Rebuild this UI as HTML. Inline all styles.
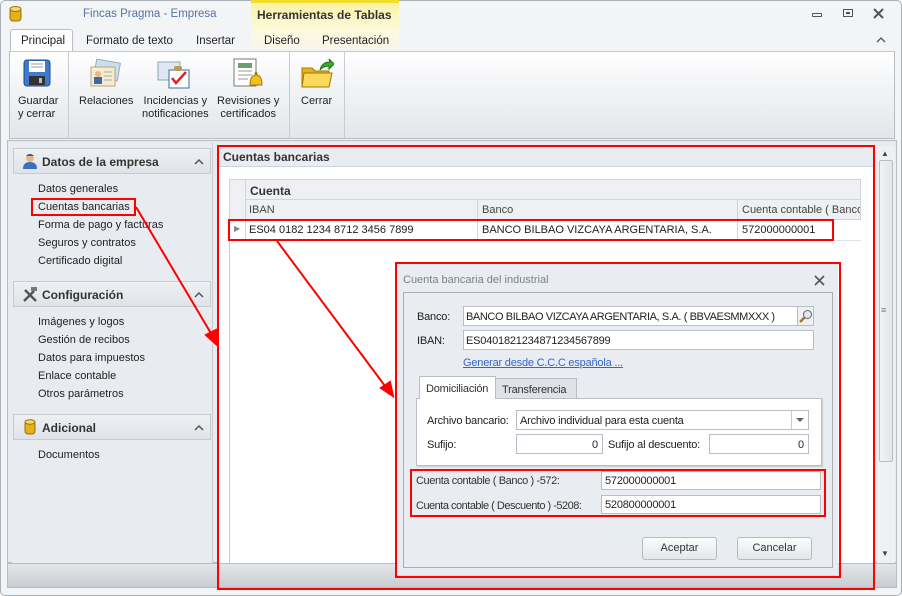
<!DOCTYPE html>
<html><head><meta charset="utf-8"><style>
*{box-sizing:border-box;margin:0;padding:0}
body{width:902px;height:596px;overflow:hidden;background:#fff;font-family:"Liberation Sans",sans-serif;font-size:11px;color:#222;position:relative}
.a{position:absolute}
.t{position:absolute;white-space:nowrap;margin-top:1px}
.n{letter-spacing:-0.2px}
.inp{position:absolute;background:#fff;border:1px solid #b9bec6}
.red{position:absolute;border:2px solid #f00}
.grp{position:absolute;left:13px;width:198px;height:26px;border:1px solid #c7ccd3;background:linear-gradient(#eef0f3,#dfe3e8);font-weight:bold;font-size:12px;color:#333}
.grp .chev{position:absolute;right:10px;top:4px;font-size:11px;color:#555;font-weight:normal}
.item{position:absolute;left:38px;color:#222;margin-top:1px}
.btn{position:absolute;border:1px solid #b5bac2;border-radius:3px;background:linear-gradient(#fafbfc,#e4e7eb);text-align:center;line-height:21px;color:#333}
</style></head><body>
<div class="a" style="left:0;top:0;width:902px;height:596px;background:#f3f4f6;border:1px solid #aab0b8;border-radius:5px"></div>
<svg class="a" style="left:9px;top:5px" width="14" height="18"><rect x="1" y="3" width="11" height="13" rx="3" fill="#e6b01c" stroke="#9a6f08"/><ellipse cx="6.5" cy="4" rx="5.5" ry="2.5" fill="#f8d860" stroke="#9a6f08"/></svg>
<div class="t" style="left:83px;top:7px;color:#5575a5;font-size:11.5px">Fincas Pragma - Empresa</div>
<div class="a" style="left:251px;top:0;width:148px;height:50px;background:linear-gradient(#fbf2a8,#fdf9dd 60%,#f8f6ec);border-top:3px solid #f2dc2c"></div>
<div class="t" style="left:257px;top:7px;font-weight:bold;font-size:12px;color:#333">Herramientas de Tablas</div>
<div class="a" style="left:812px;top:13px;width:10px;height:4px;border:1px solid #555;border-radius:1px"></div>
<div class="a" style="left:843px;top:9px;width:10px;height:8px;border:1px solid #555"><div class="a" style="left:2px;top:2px;width:4px;height:2px;border:1px solid #555"></div></div>
<svg class="a" style="left:873px;top:8px" width="11" height="11"><path d="M1 1 L10 10 M10 1 L1 10" stroke="#555" stroke-width="2"/></svg>
<svg class="a" style="left:876px;top:36px" width="10" height="8"><path d="M1 6 L5 2 L9 6" stroke="#555" fill="none" stroke-width="1.3"/></svg>
<div class="a" style="left:10px;top:29px;width:63px;height:23px;background:#fff;border:1px solid #b8bdc5;border-bottom:none;border-radius:3px 3px 0 0"></div>
<div class="t" style="left:21px;top:34px;font-size:11.5px">Principal</div>
<div class="t" style="left:86px;top:34px;font-size:11.5px">Formato de texto</div>
<div class="t" style="left:196px;top:34px;font-size:11.5px">Insertar</div>
<div class="t" style="left:264px;top:34px;font-size:11.5px">Diseño</div>
<div class="t" style="left:322px;top:34px;font-size:11.5px">Presentación</div>
<div class="a" style="left:9px;top:51px;width:886px;height:88px;background:linear-gradient(#fff,#f3f4f6 40%,#e3e6ea);border:1px solid #b8bdc5;border-top-color:#c4c9d0"></div>
<div class="a" style="left:68px;top:52px;width:1px;height:86px;background:#c9cdd3"></div>
<div class="a" style="left:289px;top:52px;width:1px;height:86px;background:#c9cdd3"></div>
<div class="a" style="left:344px;top:52px;width:1px;height:86px;background:#c9cdd3"></div>
<svg class="a" style="left:23px;top:59px" width="28" height="28"><rect x="1" y="1" width="26" height="26" rx="3" fill="#3d7ccc" stroke="#204a86"/><rect x="6" y="2" width="16" height="11" fill="#fff"/><line x1="8" y1="5" x2="20" y2="5" stroke="#999"/><line x1="8" y1="8" x2="20" y2="8" stroke="#999"/><rect x="6" y="17" width="16" height="9" fill="#333"/><rect x="16" y="19" width="3" height="5" fill="#bbb"/></svg>
<svg class="a" style="left:89px;top:59px" width="32" height="30"><rect x="6" y="2" width="24" height="18" fill="#cde" stroke="#9ab" transform="rotate(10 18 11)"/><rect x="2" y="8" width="24" height="19" fill="#f5ecd0" stroke="#b9a675"/><circle cx="9" cy="15" r="3" fill="#e8b68a"/><rect x="5" y="18" width="8" height="7" fill="#3a6aa8"/><line x1="15" y1="13" x2="23" y2="13" stroke="#aaa"/><line x1="15" y1="17" x2="23" y2="17" stroke="#aaa"/><line x1="15" y1="21" x2="23" y2="21" stroke="#aaa"/></svg>
<svg class="a" style="left:157px;top:58px" width="34" height="32"><rect x="1" y="4" width="22" height="18" fill="#dde8f4" stroke="#8aa"/><rect x="12" y="12" width="20" height="18" fill="#fff" stroke="#3a6ab0"/><path d="M15 20 l4 5 l10 -11" stroke="#e02020" stroke-width="2.5" fill="none"/><rect x="17" y="8" width="8" height="5" rx="2" fill="#b89a5a"/></svg>
<svg class="a" style="left:232px;top:58px" width="32" height="30"><rect x="2" y="1" width="22" height="27" fill="#fff" stroke="#777"/><rect x="6" y="5" width="14" height="5" fill="#6aa070"/><line x1="6" y1="13" x2="20" y2="13" stroke="#999"/><line x1="6" y1="17" x2="20" y2="17" stroke="#999"/><line x1="6" y1="21" x2="16" y2="21" stroke="#999"/><path d="M18 27 q0 -10 6 -10 q6 0 6 10 z" fill="#f0c020" stroke="#a07a00"/><circle cx="24" cy="15.5" r="1.5" fill="#a07a00"/></svg>
<svg class="a" style="left:300px;top:58px" width="34" height="32"><path d="M2 10 h10 l3 3 h14 v16 h-27z" fill="#e8b020" stroke="#a07a00"/><path d="M4 15 h28 l-3 14 h-27z" fill="#fcd85a" stroke="#a07a00"/><path d="M20 12 q2 -8 10 -8 l-1 -3 l5 5 l-5 5 l0 -3 q-6 0 -9 4z" fill="#3ab030" stroke="#1a7010"/></svg>
<div class="t" style="left:18px;top:94px;line-height:13px">Guardar<br>y cerrar</div>
<div class="t" style="left:79px;top:94px">Relaciones</div>
<div class="t" style="left:142px;top:94px;line-height:13px;text-align:center">Incidencias y<br>notificaciones</div>
<div class="t" style="left:217px;top:94px;line-height:13px;text-align:center">Revisiones y<br>certificados</div>
<div class="t" style="left:301px;top:94px">Cerrar</div>
<div class="a" style="left:7px;top:140px;width:890px;height:423px;background:#e8ebef;border:1px solid #b8bdc5"></div>
<div class="a" style="left:12px;top:143px;width:201px;height:420px;background:#e8ebef;border-right:1px solid #c9cdd3"></div>
<div class="grp" style="top:148px"><svg class="a" style="left:8px;top:4px" width="16" height="17"><circle cx="8" cy="5" r="4" fill="#e8b68a"/><path d="M4 3 q4 -4 8 0 z" fill="#2a5aa0"/><path d="M1 16 q0 -7 7 -7 q7 0 7 7z" fill="#3a70c0"/></svg><span class="t" style="left:28px;top:5px">Datos de la empresa</span><svg class="a" style="left:180px;top:9px" width="10" height="7"><path d="M1 6 L5 2 L9 6" stroke="#555" fill="none" stroke-width="1.5"/></svg></div>
<div class="item" style="top:182px">Datos generales</div>
<div class="item" style="top:200px">Cuentas bancarias</div>
<div class="item" style="top:218px">Forma de pago y facturas</div>
<div class="item" style="top:236px">Seguros y contratos</div>
<div class="item" style="top:254px">Certificado digital</div>
<div class="grp" style="top:281px"><svg class="a" style="left:8px;top:4px" width="16" height="17"><path d="M2 15 l10 -10 M3 4 l11 11" stroke="#555" stroke-width="2.5"/><rect x="9" y="1" width="6" height="4" fill="#777"/></svg><span class="t" style="left:28px;top:5px">Configuración</span><svg class="a" style="left:180px;top:9px" width="10" height="7"><path d="M1 6 L5 2 L9 6" stroke="#555" fill="none" stroke-width="1.5"/></svg></div>
<div class="item" style="top:315px">Imágenes y logos</div>
<div class="item" style="top:333px">Gestión de recibos</div>
<div class="item" style="top:351px">Datos para impuestos</div>
<div class="item" style="top:369px">Enlace contable</div>
<div class="item" style="top:387px">Otros parámetros</div>
<div class="grp" style="top:414px"><svg class="a" style="left:10px;top:3px" width="12" height="18"><rect x="1" y="3" width="10" height="13" rx="3" fill="#e6b01c" stroke="#9a6f08"/><ellipse cx="6" cy="4" rx="5" ry="2.2" fill="#f8d860" stroke="#9a6f08"/></svg><span class="t" style="left:28px;top:5px">Adicional</span><svg class="a" style="left:180px;top:9px" width="10" height="7"><path d="M1 6 L5 2 L9 6" stroke="#555" fill="none" stroke-width="1.5"/></svg></div>
<div class="item" style="top:448px">Documentos</div>
<div class="a" style="left:218px;top:146px;width:656px;height:417px;background:#fff"></div>
<div class="a" style="left:218px;top:146px;width:656px;height:21px;background:#e9ecf0;border-bottom:1px solid #d0d4da"></div>
<div class="t" style="left:223px;top:149px;font-weight:bold;font-size:12px;color:#333">Cuentas bancarias</div>
<div class="a" style="left:229px;top:179px;width:632px;height:384px;border-left:1px solid #c9cdd3"></div>
<div class="a" style="left:229px;top:179px;width:632px;height:41px;background:#eef0f3;border:1px solid #d0d4da"></div>
<div class="a" style="left:245px;top:179px;width:1px;height:62px;background:#d0d4da"></div>
<div class="a" style="left:245px;top:199px;width:616px;height:1px;background:#d0d4da"></div>
<div class="a" style="left:477px;top:199px;width:1px;height:42px;background:#d0d4da"></div>
<div class="a" style="left:737px;top:199px;width:1px;height:42px;background:#d0d4da"></div>
<div class="a" style="left:229px;top:240px;width:632px;height:1px;background:#e0e3e7"></div>
<div class="t" style="left:250px;top:183px;font-weight:bold;font-size:12px;color:#333">Cuenta</div>
<div class="t" style="left:249px;top:203px;color:#444">IBAN</div>
<div class="t" style="left:482px;top:203px;color:#444">Banco</div>
<div class="a" style="left:738px;top:200px;width:122px;height:19px;overflow:hidden"><div class="t" style="left:4px;top:3px;color:#444">Cuenta contable ( Banco</div></div>
<div class="t" style="left:234px;top:223px;font-size:8px;color:#888">▶</div>
<div class="t" style="left:249px;top:223px">ES04 0182 1234 8712 3456 7899</div>
<div class="t" style="left:482px;top:223px">BANCO BILBAO VIZCAYA ARGENTARIA, S.A.</div>
<div class="t" style="left:742px;top:223px">572000000001</div>
<div class="a" style="left:877px;top:146px;width:18px;height:417px;background:#eef0f2"></div>
<div class="t" style="left:881px;top:148px;font-size:8px;color:#444">▲</div>
<div class="a" style="left:879px;top:160px;width:14px;height:302px;background:linear-gradient(90deg,#f2f3f5,#e2e5e9);border:1px solid #b9bec6;border-radius:2px"></div>
<div class="t" style="left:881px;top:304px;font-size:9px;color:#777">≡</div>
<div class="t" style="left:881px;top:548px;font-size:8px;color:#444">▼</div>
<div class="a" style="left:7px;top:563px;width:890px;height:25px;background:linear-gradient(#e4e6e9,#c9ccd1);border:1px solid #b8bdc5"></div>
<!-- dialog -->
<div class="a" style="left:397px;top:264px;width:441px;height:311px;background:#e9ecf0"></div>
<div class="t" style="left:403px;top:273px;color:#7a8290">Cuenta bancaria del industrial</div>
<svg class="a" style="left:814px;top:275px" width="11" height="11"><path d="M1 1 L10 10 M10 1 L1 10" stroke="#555" stroke-width="1.6"/></svg>
<div class="a" style="left:403px;top:292px;width:430px;height:276px;border:1px solid #a9aeb6"></div>
<div class="t n" style="left:417px;top:310px">Banco:</div>
<div class="inp" style="left:463px;top:306px;width:335px;height:20px"></div>
<div class="t n" style="left:466px;top:310px;letter-spacing:-0.4px">BANCO BILBAO VIZCAYA ARGENTARIA, S.A. ( BBVAESMMXXX )</div>
<div class="a" style="left:797px;top:306px;width:17px;height:20px;background:#eef0f3;border:1px solid #b9bec6"></div>
<svg class="a" style="left:799px;top:309px" width="14" height="14"><circle cx="8.5" cy="5.5" r="4" fill="#dde8f4" stroke="#666"/><line x1="5.5" y1="8.5" x2="1" y2="13" stroke="#a07a20" stroke-width="2.5"/></svg>
<div class="t n" style="left:417px;top:334px">IBAN:</div>
<div class="inp" style="left:463px;top:330px;width:351px;height:20px"></div>
<div class="t n" style="left:466px;top:334px">ES0401821234871234567899</div>
<div class="t n" style="left:463px;top:356px;color:#3366cc;text-decoration:underline">Generar desde C.C.C española ...</div>
<div class="a" style="left:419px;top:376px;width:77px;height:24px;background:#fff;border:1px solid #b9bec6;border-bottom:none"></div>
<div class="t n" style="left:426px;top:382px;color:#333">Domiciliación</div>
<div class="a" style="left:495px;top:378px;width:82px;height:21px;background:#dfe2e6;border:1px solid #b9bec6"></div>
<div class="t n" style="left:502px;top:383px;color:#333">Transferencia</div>
<div class="a" style="left:416px;top:398px;width:406px;height:68px;background:#fff;border:1px solid #b9bec6;box-shadow:1px 1px 1px #ccc"></div>
<div class="a" style="left:420px;top:398px;width:75px;height:2px;background:#fff"></div>
<div class="t n" style="left:427px;top:414px">Archivo bancario:</div>
<div class="inp" style="left:516px;top:410px;width:293px;height:20px"></div>
<div class="t n" style="left:520px;top:414px">Archivo individual para esta cuenta</div>
<div class="a" style="left:791px;top:411px;width:1px;height:18px;background:#ccc"></div>
<svg class="a" style="left:796px;top:418px" width="8" height="5"><path d="M0 0 H8 L4 4z" fill="#666"/></svg>
<div class="t n" style="left:427px;top:438px">Sufijo:</div>
<div class="inp" style="left:516px;top:434px;width:87px;height:20px"></div>
<div class="t" style="left:592px;top:438px">0</div>
<div class="t n" style="left:608px;top:438px">Sufijo al descuento:</div>
<div class="inp" style="left:709px;top:434px;width:100px;height:20px"></div>
<div class="t" style="left:798px;top:438px">0</div>
<div class="t n" style="left:416px;top:474px;color:#333;letter-spacing:-0.4px">Cuenta contable ( Banco ) -572:</div>
<div class="inp" style="left:601px;top:471px;width:220px;height:19px"></div>
<div class="t n" style="left:605px;top:474px">572000000001</div>
<div class="t n" style="left:416px;top:499px;color:#333;letter-spacing:-0.5px">Cuenta contable ( Descuento ) -5208:</div>
<div class="inp" style="left:601px;top:495px;width:220px;height:19px"></div>
<div class="t n" style="left:605px;top:498px">520800000001</div>
<div class="btn" style="left:642px;top:537px;width:75px;height:23px">Aceptar</div>
<div class="btn" style="left:737px;top:537px;width:75px;height:23px">Cancelar</div>
<div class="red" style="left:31px;top:198px;width:105px;height:18px"></div>
<div class="red" style="left:217px;top:145px;width:658px;height:445px"></div>
<div class="red" style="left:228px;top:219px;width:606px;height:22px"></div>
<div class="red" style="left:395px;top:262px;width:446px;height:316px"></div>
<div class="red" style="left:410px;top:469px;width:416px;height:48px"></div>
<svg class="a" style="left:0;top:0" width="902" height="596"><g stroke="#f00" stroke-width="2" fill="#f00"><line x1="136" y1="207" x2="212" y2="335"/><path d="M217 345 l-11 -10 l10 -5z"/><line x1="277" y1="241" x2="385" y2="386"/><path d="M393 396 l-12 -8 l9 -6z"/></g></svg>
</body></html>
